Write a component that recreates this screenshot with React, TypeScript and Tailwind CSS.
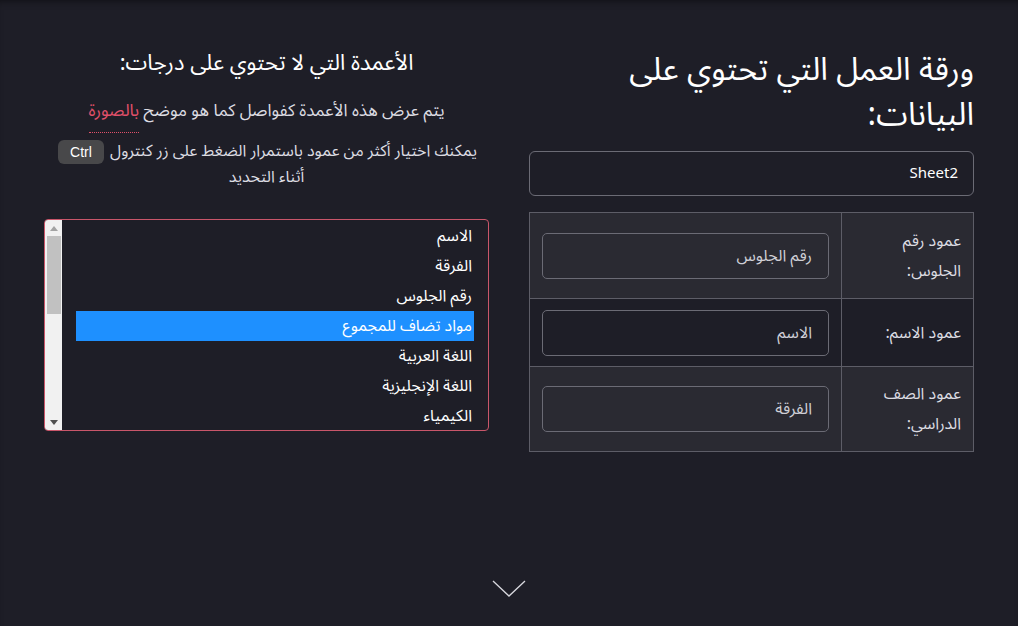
import { useState } from "react"

const columns = [
  "الاسم",
  "الفرقة",
  "رقم الجلوس",
  "مواد تضاف للمجموع",
  "اللغة العربية",
  "اللغة الإنجليزية",
  "الكيمياء",
]

const mapping = [
  { label: "عمود رقم الجلوس:", value: "رقم الجلوس", tall: true, shade: true },
  { label: "عمود الاسم:", value: "الاسم", tall: false, shade: false },
  { label: "عمود الصف الدراسي:", value: "الفرقة", tall: true, shade: true },
]

export default function App() {
  const [selected, setSelected] = useState<number>(3)

  return (
    <div
      dir="rtl"
      className="min-h-[626px] bg-[#1e1e27] text-[#e6e6ea] shadow-[inset_0_6px_8px_-6px_rgba(0,0,0,0.6)]"
      style={{ fontFamily: '"Noto Sans Arabic", "DejaVu Sans", "Noto Sans", sans-serif' }}
    >
      <div className="mx-auto w-[930px] h-[580px] pt-[48px] flex gap-[40px]">

        {/* العمود الأيمن — ورقة العمل */}
        <section className="w-[445px] shrink-0">
          <h1 className="max-w-[372px] text-[32px] leading-[45px] text-white font-normal mb-[13px]">
            ورقة العمل التي تحتوي على البيانات:
          </h1>
          <div className="h-[45px] rounded-[6px] border border-[#6b6b75] flex items-center px-[15px] text-[15px] text-white">
            Sheet2
          </div>

          <div className="mt-[16px] border border-[#5d5d67]">
            {mapping.map((row, i) => (
              <div
                key={i}
                className={`flex ${i > 0 ? "border-t border-[#5d5d67]" : ""} ${row.shade ? "bg-[#2a2a32]" : "bg-[#1e1e27]"} ${row.tall ? "h-[85px]" : "h-[68px]"}`}
              >
                <div className="w-[132px] shrink-0 border-l border-[#5d5d67] flex items-center pr-[12px] text-[16px] leading-[30px] text-[#dcdce2]">
                  <span className="max-w-[92px]">{row.label}</span>
                </div>
                <div className="flex-1 flex items-center px-[12px]">
                  <div className="w-full h-[46px] rounded-[5px] border border-[#6b6b75] flex items-center pr-[16px] text-[16px] text-[#cfcfd6]">
                    {row.value}
                  </div>
                </div>
              </div>
            ))}
          </div>
        </section>

        {/* العمود الأيسر — الأعمدة بدون درجات */}
        <section className="w-[445px] shrink-0">
          <h2 className="text-center text-[22px] leading-[30px] text-white">
            الأعمدة التي لا تحتوي على درجات:
          </h2>
          <p className="text-center text-[17px] leading-[26px] mt-[20px] text-[#dcdce2]">
            يتم عرض هذه الأعمدة كفواصل كما هو موضح{" "}
            <span className="text-[#e0506a] border-b border-dotted border-[#e0506a] pb-[3px]">بالصورة</span>
          </p>
          <p className="text-center text-[16px] leading-[26px] mt-[14px] text-[#dcdce2]">
            <span className="whitespace-nowrap">
              يمكنك اختيار أكثر من عمود باستمرار الضغط على زر كنترول{" "}
              <kbd className="inline-block bg-[#48484a] text-white rounded-[6px] px-[12px] text-[14px] leading-[24px] align-middle mx-[2px]" style={{ fontFamily: '"Liberation Sans", sans-serif' }}>
                Ctrl
              </kbd>
            </span>
            <br />
            أثناء التحديد
          </p>

          <div className="mt-[29px] h-[212px] rounded-[4px] border border-[#c9566a] flex overflow-hidden">
            <ul className="flex-1 pt-[1px] pr-[14px] pl-[14px]">
              {columns.map((c, i) => (
                <li
                  key={c}
                  onClick={() => setSelected(i)}
                  className={`h-[30px] leading-[30px] flex items-center pr-[2px] text-[16px] cursor-pointer ${selected === i ? "bg-[#1e90ff] text-white" : "text-white"}`}
                >
                  {c}
                </li>
              ))}
            </ul>
            {/* شريط التمرير */}
            <div className="w-[17px] shrink-0 bg-[#f1f1f1] flex flex-col items-center">
              <div className="h-[16px] flex items-center justify-center">
                <svg width="8" height="5" viewBox="0 0 8 5"><path d="M0 5 L4 0 L8 5 Z" fill="#a3a3a3" /></svg>
              </div>
              <div className="w-[14px] h-[78px] bg-[#c1c1c1]" />
              <div className="flex-1" />
              <div className="h-[16px] flex items-center justify-center">
                <svg width="8" height="5" viewBox="0 0 8 5"><path d="M0 0 L4 5 L8 0 Z" fill="#505050" /></svg>
              </div>
            </div>
          </div>
        </section>
      </div>

      <div className="flex justify-center">
        <svg width="34" height="18" viewBox="0 0 34 18" fill="none">
          <path d="M1 1 L17 16 L33 1" stroke="#d8d8de" strokeWidth="1.3" />
        </svg>
      </div>
    </div>
  )
}
